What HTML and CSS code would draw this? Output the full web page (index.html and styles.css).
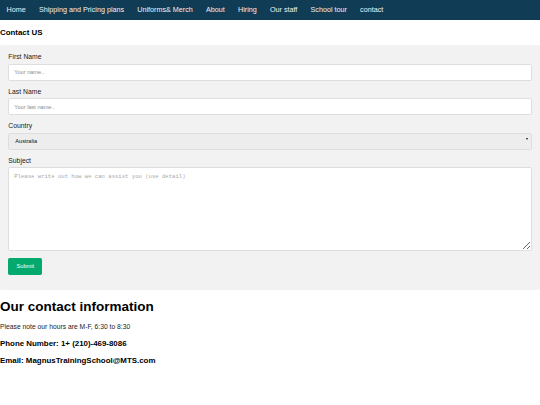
FILE: index.html
```html
<!DOCTYPE html>
<html lang="en">
<head>
<meta charset="utf-8">
<title>Contact US</title>
<link rel="stylesheet" href="styles.css">
</head>
<body>
<nav class="topnav">
  <a href="#">Home</a>
  <a href="#">Shipping and Pricing plans</a>
  <a href="#">Uniforms&amp; Merch</a>
  <a href="#">About</a>
  <a href="#">Hiring</a>
  <a href="#">Our staff</a>
  <a href="#">School tour</a>
  <a href="#">contact</a>
</nav>
<h3 class="page-title">Contact US</h3>
<div class="container">
  <form class="form">
    <label class="label" for="fname">First Name</label>
    <input class="field" type="text" id="fname" placeholder="Your name..">
    <label class="label" for="lname">Last Name</label>
    <input class="field" type="text" id="lname" placeholder="Your last name..">
    <label class="label" for="country">Country</label>
    <div class="select-wrap">
      <select class="field select" id="country">
        <option>Australia</option>
        <option>Canada</option>
        <option>USA</option>
      </select>
      <span class="select-arrow"></span>
    </div>
    <label class="label" for="subject">Subject</label>
    <textarea class="field textarea" id="subject" placeholder="Please write out how we can assist you (use detail)"></textarea>
    <button class="submit" type="button">Submit</button>
  </form>
</div>
<section class="info">
  <h1 class="info-title">Our contact information</h1>
  <p class="info-note">Please note our hours are M-F, 6:30 to 8:30</p>
  <h3 class="info-line">Phone Number: 1+ (210)-469-8086</h3>
  <h3 class="info-line">Email: MagnusTrainingSchool@MTS.com</h3>
</section>
</body>
</html>
```

FILE: styles.css
```css
* {
  box-sizing: border-box;
}

body {
  margin: 0;
  font-family: "Liberation Sans", Arial, Helvetica, sans-serif;
  color: #000;
  background: #fff;
}

.topnav {
  display: flex;
  background-color: #113c55;
  height: 20px;
  align-items: center;
}

.topnav a {
  color: #f2f2f2;
  text-decoration: none;
  font-size: 7.2px;
  padding: 0 6.6px;
  line-height: 8px;
}

.page-title {
  font-size: 7.9px;
  margin: 7.8px 0 8.4px 0;
  line-height: 9px;
}

.container {
  background-color: #f2f2f2;
  border-radius: 2px;
  padding: 8.3px 8.3px 15.5px 8.3px;
}

.form {
  display: flex;
  flex-direction: column;
  align-items: flex-start;
}

.label {
  display: block;
  font-size: 6.8px;
  line-height: 8px;
  color: #1a1a1a;
}

.field {
  width: 100%;
  height: 17px;
  margin: 2.5px 0 6.9px 0;
  padding: 0 5px;
  border: 1px solid #dedede;
  border-radius: 1.7px;
  background: #fff;
  font-family: "Liberation Sans", Arial, sans-serif;
  font-size: 5.6px;
  color: #222;
  outline: none;
}

.field::placeholder {
  color: #8c8c8c;
}

.select-wrap {
  position: relative;
  width: 100%;
}

.select {
  display: block;
  appearance: none;
  -webkit-appearance: none;
  background-color: #ededed;
  padding: 0 6px;
  color: #111;
}

.select-arrow {
  position: absolute;
  right: 4px;
  top: 8px;
  width: 0;
  height: 0;
  border-left: 1.8px solid transparent;
  border-right: 1.8px solid transparent;
  border-top: 2.4px solid #111;
}

.textarea {
  height: 84px;
  padding: 5px 5px;
  font-family: "Liberation Mono", "Courier New", monospace;
  font-size: 5.6px;
  resize: vertical;
  margin-bottom: 7px;
}

.textarea::placeholder {
  color: #a8a8a8;
}

.submit {
  height: 16.5px;
  padding: 0 8.3px;
  border: none;
  border-radius: 1.7px;
  background-color: #04aa6d;
  color: #fff;
  font-family: "Liberation Sans", Arial, sans-serif;
  font-size: 5.6px;
}

.info-title {
  font-size: 13.5px;
  line-height: 15.4px;
  margin: 8.9px 0;
}

.info-note {
  font-size: 6.75px;
  line-height: 7.7px;
  margin: 0;
  color: #222;
}

.info-line {
  font-size: 7.9px;
  line-height: 9px;
  margin: 7.8px 0;
}
```
